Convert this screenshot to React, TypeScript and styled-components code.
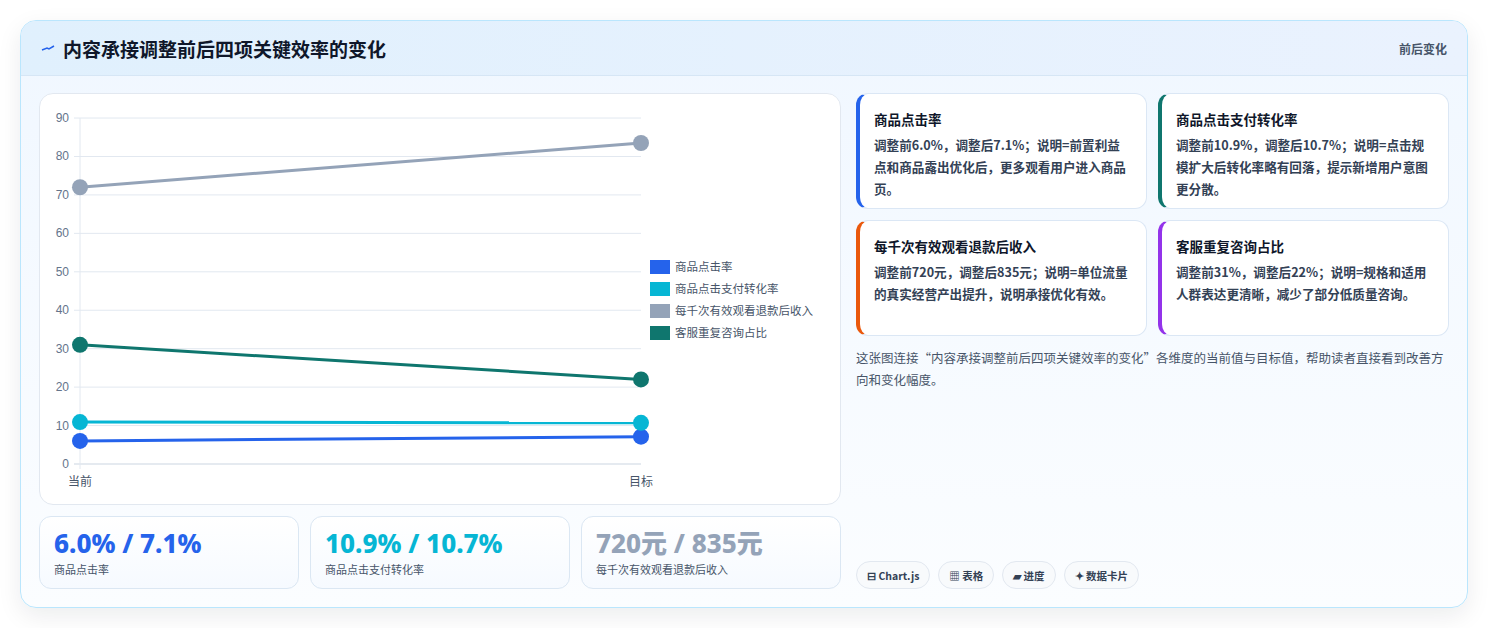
import React from "react";
import styled, { createGlobalStyle } from "styled-components";

const G = createGlobalStyle`
  body { margin:0; background:#fff; font-family: "Noto Sans CJK SC", "Noto Sans", sans-serif; }
`;
const Outer = styled.div`
  margin:20px; width:1448px; height:588px; box-sizing:border-box; border:1px solid #bae6fd; border-radius:16px;
  background:linear-gradient(180deg,#f0f7ff,#fbfdff); box-shadow:0 8px 24px rgba(15,23,42,.08); overflow:hidden;
  display:flex; flex-direction:column;
`;
const Header = styled.div`
  height:55px; box-sizing:border-box; display:flex; align-items:center; justify-content:space-between;
  padding:0 20px; background:linear-gradient(90deg,#e0f0fd,#eaf2fe); border-bottom:1px solid #d6e6f5;
`;
const Title = styled.h1`margin:0; font-size:19px; font-weight:700; color:#0f172a; display:flex; align-items:center; gap:8px;`;
const Tag = styled.span`font-size:12px; font-weight:700; color:#475569;`;
const Body = styled.div`flex:1; display:flex; gap:15px; padding:17px 18px 18px 18px;`;
const Left = styled.div`width:802px; display:flex; flex-direction:column; gap:11px;`;
const ChartCard = styled.div`height:412px; background:#fff; border:1px solid #e2e8f0; border-radius:14px; box-sizing:border-box; overflow:hidden;`;
const Stats = styled.div`display:grid; grid-template-columns:repeat(3,260px); gap:11px;`;
const Stat = styled.div`height:73px; box-sizing:border-box; border:1px solid #dbe7f3; border-radius:12px; background:linear-gradient(180deg,#fff,#f6faff); padding:9px 14px;`;
const StatVal = styled.div<{c:string}>`font-family:"Noto Sans","Noto Sans CJK SC",sans-serif; font-size:26px; font-weight:800; color:${p=>p.c}; line-height:34px;`;
const StatLbl = styled.div`font-size:11px; color:#475569; margin-top:1px;`;
const Right = styled.div`flex:1; display:flex; flex-direction:column;`;
const Grid = styled.div`display:grid; grid-template-columns:1fr 1fr; gap:11px 11px;`;
const Card = styled.div<{c:string}>`height:116px; box-sizing:border-box; background:#fff; border:1px solid #dbe7f5; border-left:4px solid ${p=>p.c}; border-radius:12px; padding:15px 14px 0 14px;`;
const CardT = styled.div`font-size:13.5px; font-weight:700; color:#0f172a; margin-bottom:5px;`;
const CardD = styled.div`font-size:12.6px; font-weight:700; color:#334155; line-height:22px;`;
const Note = styled.p`margin:11px 0 0; font-size:12.5px; color:#475569; line-height:22px; flex:1;`;
const Chips = styled.div`display:flex; gap:8px;`;
const Chip = styled.span`height:28px; box-sizing:border-box; padding:0 10px; border:1px solid #e2e8f0; border-radius:14px; background:#f8fafc; display:flex; align-items:center; gap:4px; font-size:10.5px; font-weight:700; color:#334155;`;

const C = ["#2563eb","#06b6d4","#94a3b8","#0f766e"];
const names = ["商品点击率","商品点击支付转化率","每千次有效观看退款后收入","客服重复咨询占比"];
const data = [[6,7.1],[10.9,10.7],[72,83.5],[31,22]];
const y = (v:number)=>370-v*3.844;

function Chart(){
  return (
    <svg width="801" height="412" viewBox="0 0 801 412">
      {[0,10,20,30,40,50,60,70,80,90].map(v=>(
        <g key={v}>
          <line x1={34} x2={601} y1={y(v)} y2={y(v)} stroke={v===0?"#cbd5e1":"#e2e8f0"} />
          <text x={29} y={y(v)+4} fontSize="12" fill="#64748b" textAnchor="end" fontFamily="Liberation Sans">{v}</text>
        </g>
      ))}
      <line x1={40} x2={40} y1={y(90)} y2={y(0)+5} stroke="#e2e8f0"/>
      <text x={40} y={392} fontSize="12" fill="#475569" textAnchor="middle">当前</text>
      <text x={601} y={392} fontSize="12" fill="#475569" textAnchor="middle">目标</text>
      {data.map((d,i)=>(
        <g key={i}>
          <line x1={40} x2={601} y1={y(d[0])} y2={y(d[1])} stroke={C[i]} strokeWidth="3"/>
          <circle cx={40} cy={y(d[0])} r="8" fill={C[i]}/>
          <circle cx={601} cy={y(d[1])} r="8" fill={C[i]}/>
        </g>
      ))}
      {names.map((n,i)=>(
        <g key={n}>
          <rect x={610} y={166+i*22} width={20} height={14} fill={C[i]}/>
          <text x={635} y={177+i*22} fontSize="11.5" fill="#475569">{n}</text>
        </g>
      ))}
    </svg>
  );
}

export default function App(){
  return (<>
    <G/>
    <Outer>
      <Header>
        <Title><svg width="14" height="10" viewBox="0 0 14 10"><path d="M1 7 L6 5 L8 6 L13 3" stroke="#2563eb" strokeWidth="1.5" fill="none"/></svg>内容承接调整前后四项关键效率的变化</Title>
        <Tag>前后变化</Tag>
      </Header>
      <Body>
        <Left>
          <ChartCard><Chart/></ChartCard>
          <Stats>
            <Stat><StatVal c="#2563eb">6.0% / 7.1%</StatVal><StatLbl>商品点击率</StatLbl></Stat>
            <Stat><StatVal c="#06b6d4">10.9% / 10.7%</StatVal><StatLbl>商品点击支付转化率</StatLbl></Stat>
            <Stat><StatVal c="#94a3b8">720元 / 835元</StatVal><StatLbl>每千次有效观看退款后收入</StatLbl></Stat>
          </Stats>
        </Left>
        <Right>
          <Grid>
            <Card c="#2563eb"><CardT>商品点击率</CardT><CardD>调整前6.0%，调整后7.1%；说明=前置利益点和商品露出优化后，更多观看用户进入商品页。</CardD></Card>
            <Card c="#0f766e"><CardT>商品点击支付转化率</CardT><CardD>调整前10.9%，调整后10.7%；说明=点击规模扩大后转化率略有回落，提示新增用户意图更分散。</CardD></Card>
            <Card c="#ea580c"><CardT>每千次有效观看退款后收入</CardT><CardD>调整前720元，调整后835元；说明=单位流量的真实经营产出提升，说明承接优化有效。</CardD></Card>
            <Card c="#9333ea"><CardT>客服重复咨询占比</CardT><CardD>调整前31%，调整后22%；说明=规格和适用人群表达更清晰，减少了部分低质量咨询。</CardD></Card>
          </Grid>
          <Note>这张图连接“内容承接调整前后四项关键效率的变化”各维度的当前值与目标值，帮助读者直接看到改善方向和变化幅度。</Note>
          <Chips>
            <Chip>⊟ Chart.js</Chip><Chip>▦ 表格</Chip><Chip>▰ 进度</Chip><Chip>✦ 数据卡片</Chip>
          </Chips>
        </Right>
      </Body>
    </Outer>
  </>);
}
